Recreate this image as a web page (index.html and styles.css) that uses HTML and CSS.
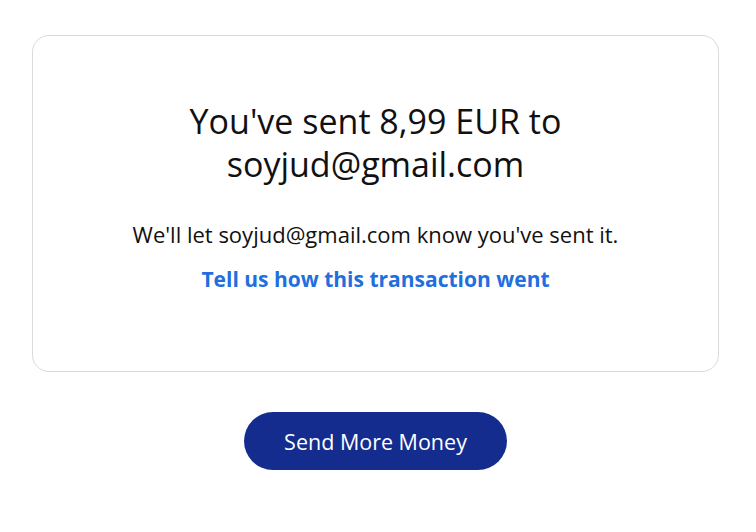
FILE: index.html
```html
<!DOCTYPE html>
<html lang="en">
<head>
  <meta charset="UTF-8" />
  <title>Payment sent</title>
  <link rel="stylesheet" href="styles.css">
</head>
<body>
  <main class="page">
    <section class="card">
      <h1 class="title">You've sent 8,99 EUR to<br>soyjud@gmail.com</h1>
      <p class="note">We'll let soyjud@gmail.com know you've sent it.</p>
      <a href="#" class="feedback">Tell us how this transaction went</a>
    </section>
    <div class="actions">
      <a href="#" class="btn-primary">Send More Money</a>
    </div>
  </main>
</body>
</html>
```
FILE: styles.css
```css
* {
  box-sizing: border-box;
  margin: 0;
  padding: 0;
}
body {
  font-family: 'Open Sans', 'Noto Sans', sans-serif;
  background: #fff;
  color: #111;
}
a {
  text-decoration: none;
}

.page {
  padding: 35px 37px 0 32px;
}

.card {
  border: 1px solid #dcdad7;
  border-radius: 17px;
  height: 337px;
  padding-top: 64px;
  text-align: center;
}
.title {
  font-weight: 400;
  font-size: 34px;
  line-height: 43px;
  color: #111;
}
.note {
  margin-top: 33px;
  font-size: 22px;
  line-height: 30px;
}
.feedback {
  display: inline-block;
  margin-top: 16px;
  font-size: 21px;
  font-weight: 700;
  color: #1f6fde;
}

.actions {
  display: flex;
  justify-content: center;
  margin-top: 40px;
}
.btn-primary {
  display: inline-flex;
  align-items: center;
  justify-content: center;
  width: 263px;
  height: 58px;
  border-radius: 29px;
  background: #142c8e;
  color: #fff;
  font-size: 21.5px;
  font-weight: 500;
}
```
